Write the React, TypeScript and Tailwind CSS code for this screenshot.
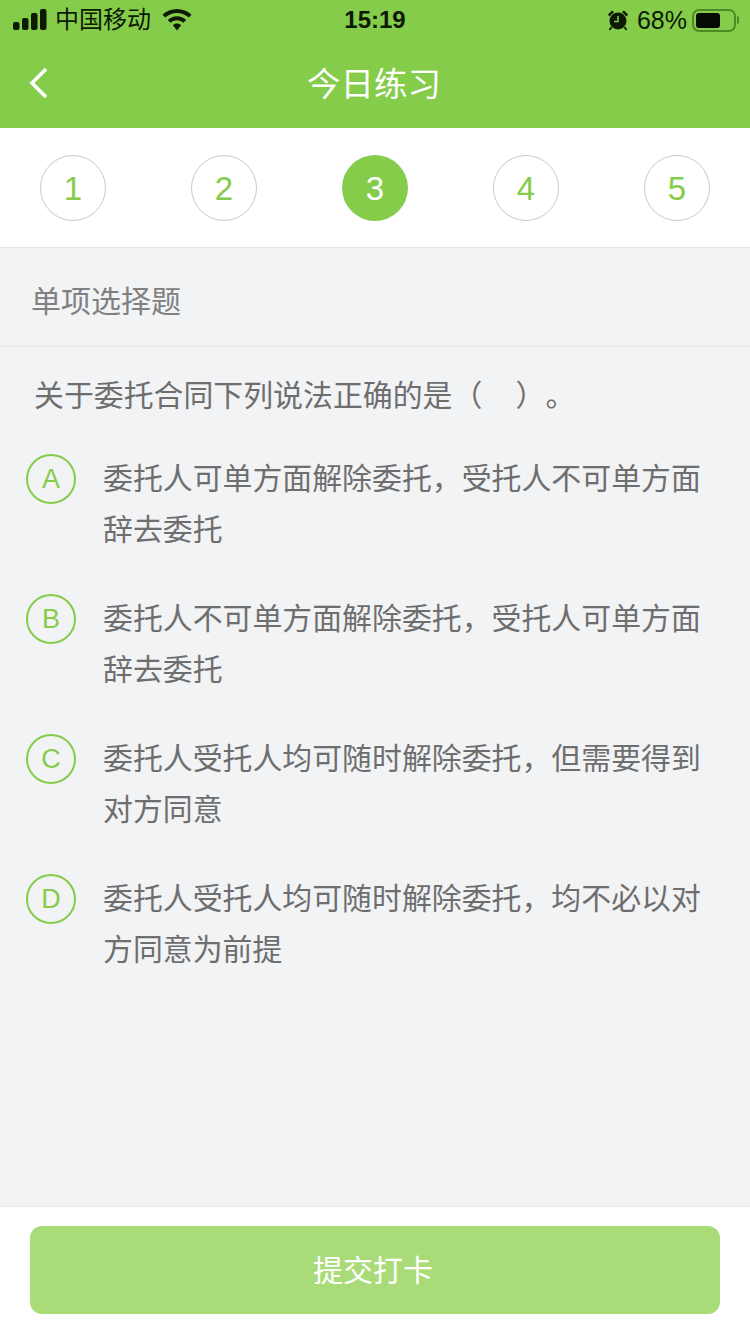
const STEPS = [1, 2, 3, 4, 5];
const CURRENT_STEP = 3;

const OPTIONS = [
  { key: 'A', text: '委托人可单方面解除委托，受托人不可单方面辞去委托' },
  { key: 'B', text: '委托人不可单方面解除委托，受托人可单方面辞去委托' },
  { key: 'C', text: '委托人受托人均可随时解除委托，但需要得到对方同意' },
  { key: 'D', text: '委托人受托人均可随时解除委托，均不必以对方同意为前提' },
];

const FONT = 'font-["Liberation_Sans","Noto_Sans_CJK_SC",sans-serif]';

function StatusBar() {
  return (
    <div className="relative flex h-10 items-center justify-between pl-[13px] pr-[11px] text-[#0d1a05]">
      <div className="flex items-center">
        <svg width="34" height="22" viewBox="0 0 34 22" fill="currentColor">
          <rect x="0" y="13" width="6.500" height="8" rx="2" />
          <rect x="9" y="9" width="6.500" height="12" rx="2" />
          <rect x="18" y="4" width="6.500" height="17" rx="2" />
          <rect x="27" y="0" width="6.500" height="21" rx="2" />
        </svg>
        <span className="ml-[8px] text-[24px] leading-none">中国移动</span>
        <svg className="ml-[11px]" width="30" height="22" viewBox="0 0 30 22" fill="currentColor">
          <path d="M15 0C9.400 0 4.300 2.200.5 5.800l2.700 2.800C6.300 5.700 10.400 3.900 15 3.900s8.700 1.800 11.800 4.700l2.700-2.800C25.700 2.200 20.600 0 15 0z" />
          <path d="M15 7.300c-3.600 0-6.800 1.400-9.200 3.700l2.700 2.800c1.700-1.600 4-2.600 6.500-2.600s4.800 1 6.500 2.600l2.700-2.800c-2.400-2.300-5.600-3.700-9.200-3.700z" />
          <path d="M15 14.600c-1.600 0-3 .6-4.100 1.600L15 21.500l4.100-5.300c-1.100-1-2.500-1.600-4.100-1.600z" />
        </svg>
      </div>
      <span className="absolute left-1/2 -translate-x-1/2 text-[24px] font-bold leading-none">15:19</span>
      <div className="flex items-center">
        <svg width="22" height="22" viewBox="0 0 22 22" fill="currentColor">
          <circle cx="11" cy="12" r="8.500" />
          <path d="M1 5.500 5 1.500 7 3 2.500 7.500zM21 5.500 17 1.500 15 3 19.500 7.500z" />
          <path d="M4.500 18 2.500 21M17.500 18l2 3" stroke="currentColor" strokeWidth="1.800" />
          <path d="M11 7v5.500H7" stroke="#85cc4b" strokeWidth="1.500" fill="none" />
        </svg>
        <span className="ml-[8px] text-[25px] leading-none">68%</span>
        <div className="ml-[5px] flex h-[23px] w-[44px] items-center rounded-[7px] border-2 border-[#4f8a24] p-[2px]">
          <div className="h-full w-[24px] rounded-[3px] bg-[#050a02]" />
        </div>
        <div className="ml-[1px] h-[8px] w-[2px] rounded-r-sm bg-[#4f8a24]" />
      </div>
    </div>
  );
}

function NavBar() {
  return (
    <div className="relative flex h-[88px] items-center justify-center">
      <svg className="absolute left-[27px] top-[26px]" width="24" height="34" viewBox="0 0 24 34" fill="none">
        <path d="M19 3 5 17l14 14" stroke="white" strokeWidth="3.600" />
      </svg>
      <h1 className="pr-[2px] pt-[2px] text-[33.500px] font-normal leading-none text-white">今日练习</h1>
    </div>
  );
}

function StepBar() {
  return (
    <div className="flex h-[120px] items-start justify-between border-b border-[#e6e7e9] bg-white px-10 pt-[27px]">
      {STEPS.map((step) => (
        <div
          key={step}
          className={`flex h-[66px] w-[66px] items-center justify-center rounded-full text-[33px] leading-none ${
            step === CURRENT_STEP
              ? 'bg-[#85cc4b] text-white'
              : 'border border-[#c9c9c9] bg-white text-[#85cc4b]'
          }`}
        >
          {step}
        </div>
      ))}
    </div>
  );
}

function OptionRow({ optionKey, text }: { optionKey: string; text: string }) {
  return (
    <div className="flex items-start">
      <div className="mt-[1px] flex h-[50px] w-[50px] shrink-0 items-center justify-center rounded-full border-2 border-[#85cc4b] text-[27px] leading-none text-[#85cc4b]">
        {optionKey}
      </div>
      <p className="ml-[27px] w-[600px] text-[29.900px] leading-[51px] text-[#6e6e6e]">{text}</p>
    </div>
  );
}

export default function App() {
  return (
    <div className={`flex h-[1334px] w-[750px] flex-col overflow-hidden bg-[#f2f3f5] ${FONT}`}>
      <div className="bg-[#85cc4b]">
        <StatusBar />
        <NavBar />
      </div>
      <StepBar />

      <div className="flex h-[99px] items-center border-b border-[#e6e7e9] pl-[31px] pt-[8px] text-[30px] text-[#808080]">
        单项选择题
      </div>

      <div className="flex-1 pl-[26px]">
        <p className="ml-[8px] mt-[27px] text-[29.900px] leading-[44px] text-[#6e6e6e] [text-spacing-trim:space-all]">
          关于委托合同下列说法正确的是（&nbsp;&nbsp;&nbsp;&nbsp;）。
        </p>
        <div className="mt-[35px] flex flex-col gap-[38px]">
          {OPTIONS.map((option) => (
            <OptionRow key={option.key} optionKey={option.key} text={option.text} />
          ))}
        </div>
      </div>

      <div className="h-[128px] border-t border-[#e9eaec] bg-white px-[30px] pt-[19px]">
        <button className="flex h-[88px] w-full items-center justify-center rounded-[12px] bg-[#a9dc79] pr-[4px] text-[30px] text-white">
          提交打卡
        </button>
      </div>
    </div>
  );
}
